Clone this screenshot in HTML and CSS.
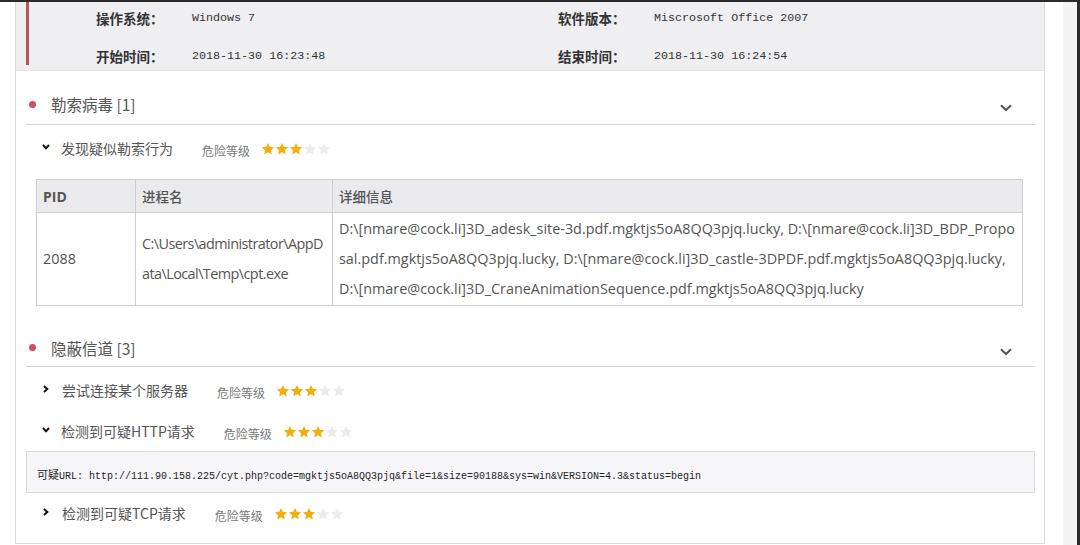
FILE: index.html
```html
<!DOCTYPE html>
<html lang="zh-CN">
<head>
<meta charset="utf-8">
<title>分析报告</title>
<link rel="stylesheet" href="styles.css">
</head>
<body>
<svg width="0" height="0" class="defs" aria-hidden="true">
  <defs>
    <symbol id="star" viewBox="0 0 24 24">
      <polygon points="12,1.5 15.1,8.3 22.5,9.1 17,14.1 18.5,21.4 12,17.7 5.5,21.4 7,14.1 1.5,9.1 8.9,8.3"/>
    </symbol>
    <symbol id="chev-sec" viewBox="0 0 12 8">
      <polyline points="1,1.2 6,6 11,1.2" fill="none" stroke="currentColor" stroke-width="2"/>
    </symbol>
    <symbol id="chev-down" viewBox="0 0 8 6">
      <polyline points="1,1 4,4.3 7,1" fill="none" stroke="currentColor" stroke-width="2"/>
    </symbol>
    <symbol id="chev-right" viewBox="0 0 6 8">
      <polyline points="1,1 4.3,4 1,7" fill="none" stroke="currentColor" stroke-width="2"/>
    </symbol>
  </defs>
</svg>
<div class="page">
  <div class="panel">
    <div class="info">
      <div class="info-bar"></div>
      <div class="info-grid">
        <div class="label">操作系统：</div><div class="value">Windows 7</div>
        <div class="label">软件版本：</div><div class="value">Miscrosoft Office 2007</div>
        <div class="label">开始时间：</div><div class="value">2018-11-30 16:23:48</div>
        <div class="label">结束时间：</div><div class="value">2018-11-30 16:24:54</div>
      </div>
    </div>

    <div class="section">
      <div class="sec-head">
        <span class="dot"></span>
        <span class="sec-title">勒索病毒 [1]</span>
        <svg class="sec-chev"><use href="#chev-sec"/></svg>
      </div>
      <div class="item">
        <svg class="item-chev down"><use href="#chev-down"/></svg>
        <span class="item-name">发现疑似勒索行为</span>
        <span class="risk">危险等级</span>
        <span class="stars">
          <svg class="star on"><use href="#star"/></svg><svg class="star on"><use href="#star"/></svg><svg class="star on"><use href="#star"/></svg><svg class="star"><use href="#star"/></svg><svg class="star"><use href="#star"/></svg>
        </span>
      </div>
      <table class="ptable">
        <thead>
          <tr><th class="c-pid">PID</th><th class="c-name">进程名</th><th class="c-detail">详细信息</th></tr>
        </thead>
        <tbody>
          <tr>
            <td>2088</td>
            <td class="proc">C:\Users\administrator\AppData\Local\Temp\cpt.exe</td>
            <td>D:\[nmare@cock.li]3D_adesk_site-3d.pdf.mgktjs5oA8QQ3pjq.lucky, D:\[nmare@cock.li]3D_BDP_Proposal.pdf.mgktjs5oA8QQ3pjq.lucky, D:\[nmare@cock.li]3D_castle-3DPDF.pdf.mgktjs5oA8QQ3pjq.lucky, D:\[nmare@cock.li]3D_CraneAnimationSequence.pdf.mgktjs5oA8QQ3pjq.lucky</td>
          </tr>
        </tbody>
      </table>
    </div>

    <div class="section sec2">
      <div class="sec-head">
        <span class="dot"></span>
        <span class="sec-title">隐蔽信道 [3]</span>
        <svg class="sec-chev"><use href="#chev-sec"/></svg>
      </div>
      <div class="item">
        <svg class="item-chev right"><use href="#chev-right"/></svg>
        <span class="item-name">尝试连接某个服务器</span>
        <span class="risk">危险等级</span>
        <span class="stars">
          <svg class="star on"><use href="#star"/></svg><svg class="star on"><use href="#star"/></svg><svg class="star on"><use href="#star"/></svg><svg class="star"><use href="#star"/></svg><svg class="star"><use href="#star"/></svg>
        </span>
      </div>
      <div class="item">
        <svg class="item-chev down"><use href="#chev-down"/></svg>
        <span class="item-name">检测到可疑HTTP请求</span>
        <span class="risk">危险等级</span>
        <span class="stars">
          <svg class="star on"><use href="#star"/></svg><svg class="star on"><use href="#star"/></svg><svg class="star on"><use href="#star"/></svg><svg class="star"><use href="#star"/></svg><svg class="star"><use href="#star"/></svg>
        </span>
      </div>
      <div class="urlbox"><span class="url-label">可疑</span><span class="url-text">URL: http://111.90.158.225/cyt.php?code=mgktjs5oA8QQ3pjq&amp;file=1&amp;size=90188&amp;sys=win&amp;VERSION=4.3&amp;status=begin</span></div>
      <div class="item">
        <svg class="item-chev right"><use href="#chev-right"/></svg>
        <span class="item-name">检测到可疑TCP请求</span>
        <span class="risk">危险等级</span>
        <span class="stars">
          <svg class="star on"><use href="#star"/></svg><svg class="star on"><use href="#star"/></svg><svg class="star on"><use href="#star"/></svg><svg class="star"><use href="#star"/></svg><svg class="star"><use href="#star"/></svg>
        </span>
      </div>
    </div>
  </div>
  <div class="gutter"></div>
  <div class="scrollbar"></div>
</div>
</body>
</html>
```

FILE: styles.css
```css
* { box-sizing: border-box; }

html, body {
  margin: 0;
  padding: 0;
  background: #fff;
}

body {
  font-family: "Noto Sans CJK SC", "Noto Sans", sans-serif;
  color: #555;
  width: 1080px;
  height: 545px;
  overflow: hidden;
}

.defs { position: absolute; width: 0; height: 0; }

.page {
  display: flex;
  height: 545px;
  border-top: 2px solid #2a2a2a;
  border-right: 3px solid #2a2a2a;
}

.panel {
  margin-left: 15px;
  width: 1030px;
  height: 542px;
  border-left: 1px solid #dcdcdc;
  border-right: 1px solid #dcdcdc;
  border-bottom: 1px solid #dcdcdc;
  display: flex;
  flex-direction: column;
}

.gutter { width: 18px; }
.scrollbar {
  flex: 1;
  background: #f4f4f6;
}

/* info header */
.info {
  display: flex;
  background: #efeff1;
  height: 69px;
  border-bottom: 1px solid #e2e2e4;
}
.info-bar {
  width: 3px;
  height: 63px;
  margin-left: 10px;
  background: #b65460;
}
.info-grid {
  display: grid;
  grid-template-columns: 96px 366px 96px 1fr;
  grid-template-rows: 20px 20px;
  row-gap: 18px;
  padding: 6px 0 0 67px;
  flex: 1;
  align-items: center;
}
.label {
  font-size: 13.5px;
  font-weight: 700;
  color: #333;
  line-height: 20px;
}
.value {
  font-family: "Liberation Mono", "Noto Sans CJK SC", monospace;
  font-size: 11.7px;
  color: #333;
  line-height: 20px;
}

/* sections */
.section {
  margin: 0 9px 0 10px;
}
.sec-head {
  display: flex;
  align-items: center;
  padding: 21px 0 8px 0;
  border-bottom: 1px solid #d5d5d5;
  height: 54px;
}
.sec2 .sec-head {
  padding-top: 0;
  margin-top: 30px;
  height: 31px;
  padding-bottom: 7px;
}
.dot {
  width: 7px;
  height: 7px;
  border-radius: 50%;
  background: #d34c5e;
  margin-left: 3px;
}
.sec-title {
  margin-left: 15px;
  font-size: 15.5px;
  line-height: 24px;
  color: #555;
  flex: 1;
}
.sec-chev {
  width: 12px;
  height: 8px;
  color: #555;
  margin-right: 23px;
  margin-top: 8px;
}

/* items */
.item {
  display: flex;
  align-items: center;
  height: 42px;
  padding-top: 4px;
}
.sec2 .item {
  height: 41px;
  padding-top: 5px;
}
.sec2 .urlbox + .item {
  height: 40px;
  padding-top: 0;
}
.item-chev {
  color: #111;
  margin-left: 16px;
}
.item-chev.down {
  width: 8px;
  height: 6px;
  margin-top: -3px;
}
.item-chev.right {
  width: 6px;
  height: 8px;
  margin-left: 17px;
  margin-right: 2px;
  margin-top: -2px;
}
.item-name {
  margin-left: 11px;
  font-size: 14px;
  line-height: 20px;
  color: #555;
}
.risk {
  margin-left: 29px;
  font-size: 12px;
  color: #777;
  margin-top: 4px;
}
.stars {
  margin-left: 11px;
  display: flex;
  margin-top: 2px;
}
.star {
  width: 14px;
  height: 14px;
  fill: #ececec;
}
.star.on { fill: #f2b010; }

/* table */
.ptable {
  margin: 12px 11px 0 10px;
  width: 987px;
  border-collapse: collapse;
  table-layout: fixed;
  font-family: "Open Sans", "Noto Sans CJK SC", sans-serif;
  font-size: 14.4px;
  color: #555;
}
.ptable th, .ptable td {
  border: 1px solid #cfcfd1;
  text-align: left;
  padding: 0 6px;
}
.ptable th {
  background: #ebebed;
  height: 33px;
  font-weight: 700;
  color: #555;
  font-size: 14px;
  font-family: "Open Sans", "Noto Sans CJK SC", sans-serif;
}
.ptable th.c-name, .ptable th.c-detail {
  font-family: "Noto Sans CJK SC", sans-serif;
  font-weight: 500;
  font-size: 13.5px;
}
.c-pid { width: 99px; }
.c-name { width: 197px; }
.ptable td {
  height: 93px;
  line-height: 30px;
  word-break: break-all;
  vertical-align: middle;
}
.ptable td.proc {
  letter-spacing: -0.55px;
  padding-right: 3px;
}

/* url box */
.urlbox {
  margin-top: 2px;
  height: 42px;
  background: #f6f6f8;
  border: 1px solid #dcdcde;
  padding: 0 10px;
  line-height: 40px;
  color: #222;
  white-space: nowrap;
}
.url-label {
  font-family: "Noto Sans CJK SC", sans-serif;
  font-size: 11px;
}
.url-text {
  font-family: "Liberation Mono", monospace;
  font-size: 10px;
}
```
